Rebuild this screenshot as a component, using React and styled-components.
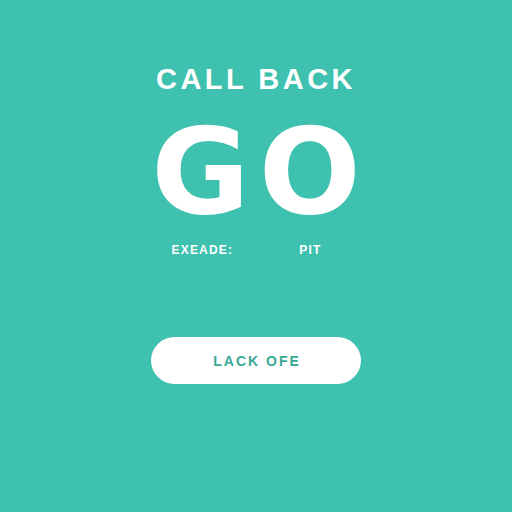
import React from "react";
import styled, { createGlobalStyle } from "styled-components";

const Global = createGlobalStyle`
  html, body { margin: 0; padding: 0; }
  body { background: #3ec1ae; font-family: "Liberation Sans", Arial, sans-serif; }
`;

const Page = styled.div`
  width: 512px;
  height: 512px;
  background: #3ec1ae;
  display: flex;
  flex-direction: column;
  align-items: center;
  box-sizing: border-box;
  padding-top: 62px;
`;

const Title = styled.h1`
  margin: 0;
  color: #ffffff;
  font-family: "Liberation Sans", Arial, sans-serif;
  font-weight: 700;
  font-size: 29px;
  line-height: 34px;
  letter-spacing: 3.5px;
  padding-left: 0;
`;

const Big = styled.div`
  margin-top: 20px;
  color: #ffffff;
  font-family: "DejaVu Sans", "Liberation Sans", sans-serif;
  font-weight: 700;
  font-size: 120px;
  line-height: 112px;
  letter-spacing: 9px;
  padding-left: 9px;
`;

const Labels = styled.div`
  margin-top: 15px;
  display: flex;
  gap: 66px;
  padding-right: 19px;
`;

const Label = styled.span`
  color: #ffffff;
  font-family: "Liberation Sans", Arial, sans-serif;
  font-weight: 700;
  font-size: 12px;
  line-height: 14px;
  letter-spacing: 1.2px;
`;

const Button = styled.button`
  margin-top: 80px;
  width: 210px;
  height: 47px;
  border: none;
  border-radius: 24px;
  background: #ffffff;
  color: #39a996;
  font-family: "Liberation Sans", Arial, sans-serif;
  font-weight: 700;
  font-size: 14px;
  letter-spacing: 2px;
  padding: 0 0 0 2px;
  cursor: pointer;
`;

export default function App() {
  return (
    <>
      <Global />
      <Page>
        <Title>CALL BACK</Title>
        <Big>GO</Big>
        <Labels>
          <Label>EXEADE:</Label>
          <Label>PIT</Label>
        </Labels>
        <Button>LACK OFE</Button>
      </Page>
    </>
  );
}
